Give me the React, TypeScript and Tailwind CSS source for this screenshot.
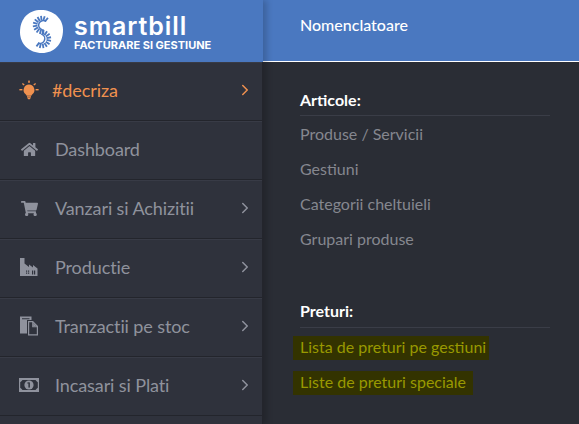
import { ChevronRight } from 'lucide-react'
import { FaHome, FaShoppingCart } from 'react-icons/fa'
import type { ReactNode } from 'react'

const Bulb = () => (
  <svg width="20" height="20" viewBox="0 0 20 20" fill="currentColor">
    <path d="M10 4.6a5.4 5.4 0 0 0-3.4 9.6c.6.6.9 1.1 1 1.6h4.8c.1-.5.4-1 1-1.6A5.4 5.4 0 0 0 10 4.6z" />
    <rect x="8" y="16.2" width="4" height="1.4" />
    <rect x="8.6" y="17.8" width="2.8" height="1.4" rx="0.7" />
    <rect x="9.2" y="0.6" width="1.6" height="2.2" />
    <rect x="0.4" y="9" width="3" height="1.4" />
    <rect x="16.6" y="9" width="3" height="1.4" />
    <rect x="3.6" y="3" width="1.4" height="2.4" transform="rotate(-50 4.3 4.2)" />
    <rect x="15" y="3" width="1.4" height="2.4" transform="rotate(50 15.7 4.2)" />
  </svg>
)

const Factory = () => (
  <svg width="20" height="20" viewBox="0 0 20 20" fill="currentColor" fillRule="evenodd">
    <path d="M1 1h4.5v5.5l4.5 3.5V7.5l4 3V8l4.5 3.5V19H1zM7 13.5h1.2v1.2H7zM9 13.5h1.2v1.2H9zM7 15.5h1.2v1.2H7zM9 15.5h1.2v1.2H9zM13 13.5h1.2v4H13zM15 13.5h1.2v4H15z" />
  </svg>
)

const Docs = () => (
  <svg width="20" height="20" viewBox="0 0 20 20" fill="currentColor" fillRule="evenodd">
    <path d="M1 0.5h11.5v3.5H8v13.5H1zM3 2.2v1h7.5v-1z" />
    <path d="M9 5h5l5 5v9.5H9zM10.2 6.2v12.1h7.6v-7.1h-4.6V6.2zM14.2 6.8v3.4h3.2z" />
    <path d="M14.2 6.8l3.2 3.4h-3.2z" />
  </svg>
)

const Money = () => (
  <svg width="20" height="20" viewBox="0 0 20 20" fill="currentColor" fillRule="evenodd">
    <path d="M0 3h20v14H0zM3.5 5C2.8 6 2 6.8 1.2 7.2v5.6c.8.4 1.6 1.2 2.3 2.2h13c.7-1 1.5-1.8 2.3-2.2V7.2C18 6.8 17.2 6 16.5 5z" />
    <circle cx="10" cy="10" r="4.6" />
    <rect x="9.4" y="7.4" width="1.5" height="5.2" fill="#2f323c" />
    <rect x="8.4" y="7.4" width="1.4" height="1.2" fill="#2f323c" />
  </svg>
)

// S mark: short rays fanning out of two opposite arcs
const logoRays: number[][] = []
for (let a = -50; a >= -280; a -= 23) {
  const t = (a * Math.PI) / 180
  logoRays.push([22 + 4.6 * Math.cos(t), 15 + 4.6 * Math.sin(t), 22 + 9.2 * Math.cos(t), 15 + 9.2 * Math.sin(t)])
}
for (let a = -80; a <= 130; a += 23) {
  const t = (a * Math.PI) / 180
  logoRays.push([22 + 4.6 * Math.cos(t), 29 + 4.6 * Math.sin(t), 22 + 9.2 * Math.cos(t), 29 + 9.2 * Math.sin(t)])
}

const Logo = () => (
  <svg width="43" height="43" viewBox="0 0 43 43" className="shrink-0">
    <path d="M21 0C33 0 43 8 43 20c0 14-9 23-21 23C9 43 0 34 0 22 0 8 9 0 21 0z" fill="#fff" />
    <g stroke="#4a78c0" strokeWidth="1.8">
      {logoRays.map((r, i) => (
        <line key={i} x1={r[0]} y1={r[1]} x2={r[2]} y2={r[3]} />
      ))}
      <path d="M26 11.5A4.6 4.6 0 1 0 22 19.6 4.6 4.6 0 0 1 22 24.4 4.6 4.6 0 0 1 18 33" fill="none" strokeWidth="1.5" />
    </g>
  </svg>
)

function NavItem({ icon, label, chevron = true, active = false }: { icon: ReactNode; label: string; chevron?: boolean; active?: boolean }) {
  return (
    <div className={`h-[59px] shrink-0 flex items-center pb-[3px] pl-[19px] pr-[8px] border-b border-b-[#23252c] border-t border-t-[#383b46] ${active ? 'text-[#f0914f]' : 'text-[#8f929d]'}`}>
      <span className={`${active ? 'w-[33px]' : 'w-[36px]'} shrink-0 flex`}>{icon}</span>
      <span className="flex-1 text-[18px] leading-none tracking-[-0.1px]">{label}</span>
      {chevron && <ChevronRight className="w-[18px] h-[18px]" strokeWidth={2} />}
    </div>
  )
}

function Link({ label }: { label: string }) {
  return <div className="text-[16px] leading-[35px] text-[#85878f]">{label}</div>
}

function Marked({ label, className }: { label: string; className: string }) {
  return (
    <div className="h-[35px] flex items-center">
      <span className={`-ml-[7px] pl-[7px] h-[24px] text-[16px] leading-[22px] text-[#999900] bg-[#333300] ${className}`}>{label}</span>
    </div>
  )
}

function Heading({ label, className }: { label: string; className: string }) {
  return <div className={`text-[16px] font-bold leading-[22px] border-b border-[#3a3d47] text-white ${className}`}>{label}</div>
}

export default function App() {
  return (
    <div className="flex w-[579px] h-[424px] overflow-hidden bg-[#2a2d35] font-['Lato',sans-serif]">
      <div className="w-[263px] shrink-0 flex flex-col bg-[#2f323c] shadow-[4px_0_6px_rgba(0,0,0,0.18)] z-10">
        <div className="h-[62px] shrink-0 bg-[#4a78c0] flex items-center pl-[20px] gap-[11px]">
          <Logo />
          <div className="text-white font-['Inter',sans-serif] pt-[4px]">
            <div className="text-[25px] font-semibold leading-[20px] tracking-[0.9px]">smartbill</div>
            <div className="text-[11px] font-bold leading-[12px] mt-[3px]">FACTURARE SI GESTIUNE</div>
          </div>
        </div>
        <div className="flex-1 flex flex-col border-r border-[#23252c]">
          <NavItem active icon={<Bulb />} label="#decriza" />
          <NavItem icon={<FaHome size={17} className="ml-[2px]" />} label="Dashboard" chevron={false} />
          <NavItem icon={<FaShoppingCart size={17} className="ml-[2px]" />} label="Vanzari si Achizitii" />
          <NavItem icon={<Factory />} label="Productie" />
          <NavItem icon={<Docs />} label="Tranzactii pe stoc" />
          <NavItem icon={<Money />} label="Incasari si Plati" />
        </div>
      </div>
      <div className="flex-1 min-w-0">
        <div className="h-[62px] bg-[#4a78c0] border-b border-white pl-[37px] pt-[14px] text-[16px] leading-[22px] font-medium text-white">
          Nomenclatoare
        </div>
        <div className="pl-[37px] pr-[29px] pt-[27px]">
          <Heading label="Articole:" className="pb-[4px]" />
          <div>
            <Link label="Produse / Servicii" />
            <Link label="Gestiuni" />
            <Link label="Categorii cheltuieli" />
            <Link label="Grupari produse" />
          </div>
          <div className="mt-[44px]">
            <Heading label="Preturi:" className="pb-[5px]" />
          </div>
          <div className="pt-[2px]">
            <Marked label="Lista de preturi pe gestiuni" className="pr-[3px]" />
            <Marked label="Liste de preturi speciale" className="pr-[7px]" />
          </div>
        </div>
      </div>
    </div>
  )
}
